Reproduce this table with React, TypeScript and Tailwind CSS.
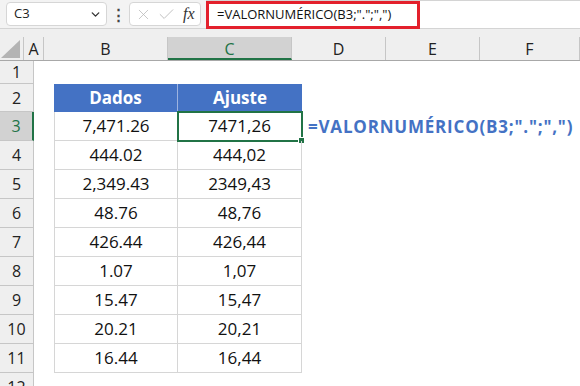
import React from 'react';
import { ChevronDown, X, Check } from 'lucide-react';

// Sheet geometry (px)
const COLS = [
  { key: 'A', w: 20 },
  { key: 'B', w: 124 },
  { key: 'C', w: 124 },
  { key: 'D', w: 94 },
  { key: 'E', w: 94 },
  { key: 'F', w: 100 },
];

const DATA: [string, string][] = [
  ['7,471.26', '7471,26'],
  ['444.02', '444,02'],
  ['2,349.43', '2349,43'],
  ['48.76', '48,76'],
  ['426.44', '426,44'],
  ['1.07', '1,07'],
  ['15.47', '15,47'],
  ['20.21', '20,21'],
  ['16.44', '16,44'],
];

const FORMULA = '=VALORNUMÉRICO(B3;".";",")';

function FormulaBar() {
  return (
    <div className="flex h-[28px] items-center bg-[#f3f3f3] pl-[6px]">
      <div className="flex h-[24px] w-[101px] items-center justify-between rounded-[4px] border border-[#d6d6d6] bg-white pl-[7px] pr-[4px]">
        <span className="text-[13px] text-[#222]">C3</span>
        <ChevronDown size={13} strokeWidth={2.5} className="text-[#333]" />
      </div>
      <div className="flex w-[22px] justify-center text-[15px] font-bold leading-none text-[#444]">⋮</div>
      <div className="flex h-[24px] w-[72px] items-center gap-[5px] rounded-[4px] border border-[#d6d6d6] bg-white pl-[5px]">
        <X size={17} strokeWidth={1.1} className="text-[#b8b8b8]" />
        <Check size={19} strokeWidth={1.1} className="text-[#b8b8b8]" />
        <span className="ml-[2px] text-[16px] italic leading-none text-[#333] [font-family:'Liberation_Serif',serif]">fx</span>
      </div>
      <div className="ml-[5px] flex h-[28px] flex-1 items-center border-t border-[#d4d4d4] bg-white">
        <div className="flex h-[28px] w-[214px] items-center border-[3px] border-[#e3202c] pl-[8px]">
          <span className="whitespace-nowrap text-[13px] text-[#111]">{FORMULA}</span>
        </div>
      </div>
    </div>
  );
}

function ColumnHeader() {
  return (
    <div className="bg-[#efefef]">
      <div className="h-[9px] border-t border-[#d4d4d4]" />
      <div className="flex h-[24px] border-b border-[#a8a8a8]">
        <div className="flex w-[34px] items-end justify-end border-r border-[#c6c6c6] pb-[2px] pr-[3px]">
          <svg width="19" height="18" viewBox="0 0 19 18">
            <polygon points="19,0 19,18 0,18" fill="#b4b4b4" />
          </svg>
        </div>
        {COLS.map((c) => {
          const sel = c.key === 'C';
          return (
            <div
              key={c.key}
              style={{ width: c.w }}
              className={
                sel
                  ? 'flex shrink-0 items-center justify-center border-b-2 border-r border-b-[#217346] border-r-[#c6c6c6] bg-[#d2d2d2] pt-[2px] text-[16px] text-[#217346]'
                  : 'flex shrink-0 items-center justify-center border-r border-[#c6c6c6] text-[16px] text-[#222]'
              }
            >
              {c.key}
            </div>
          );
        })}
      </div>
    </div>
  );
}

function RowHeader({ n, h, sel }: { n: number; h: number; sel?: boolean }) {
  return (
    <div
      style={{ height: h }}
      className={
        sel
          ? 'flex w-[34px] shrink-0 items-center justify-center border-b border-r-2 border-b-[#c6c6c6] border-r-[#217346] bg-[#d2d2d2] text-[16px] text-[#217346]'
          : 'flex w-[34px] shrink-0 items-center justify-center border-b border-r border-[#c6c6c6] bg-[#efefef] text-[16px] text-[#222]'
      }
    >
      {n}
    </div>
  );
}

export default function App() {
  return (
    <div className="h-[386px] w-[580px] overflow-hidden bg-white [font-family:'Open_Sans',sans-serif]">
      <FormulaBar />
      <ColumnHeader />

      {/* row 1 */}
      <div className="flex">
        <RowHeader n={1} h={23} />
      </div>

      {/* row 2: table head */}
      <div className="flex">
        <RowHeader n={2} h={28} />
        <div className="w-[20px] shrink-0" />
        <div className="flex h-[28px] w-[124px] shrink-0 items-center justify-center border-r border-[#9db3e0] bg-[#4472c4] text-[17px] font-bold text-white">
          Dados
        </div>
        <div className="flex h-[28px] w-[124px] shrink-0 items-center justify-center bg-[#4472c4] text-[17px] font-bold text-white">
          Ajuste
        </div>
      </div>

      {/* rows 3-11 */}
      {DATA.map(([a, b], i) => {
        const row = i + 3;
        const first = i === 0;
        return (
          <div key={row} className="flex">
            <RowHeader n={row} h={29} sel={first} />
            <div className="w-[20px] shrink-0" />
            <div className="flex h-[29px] w-[124px] shrink-0 items-center justify-center border-b border-l border-r border-[#d6d6d6] text-[17px] text-[#111]">
              {a}
            </div>
            <div className="relative flex h-[29px] w-[124px] shrink-0 items-center justify-center border-b border-r border-[#d6d6d6] text-[17px] text-[#111]">
              {b}
              {first && (
                <>
                  <div className="absolute -left-[1px] -top-[1px] h-[31px] w-[126px] border-2 border-[#217346]" />
                  <div className="absolute -bottom-[4px] -right-[4px] h-[7px] w-[7px] border border-white bg-[#217346]" />
                </>
              )}
            </div>
            {first && (
              <div className="flex h-[29px] items-center whitespace-nowrap pl-[6px] text-[17px] font-bold tracking-[0.8px] text-[#4472c4]">
                {FORMULA}
              </div>
            )}
          </div>
        );
      })}

      {/* row 12, cut by the window edge */}
      <div className="flex">
        <RowHeader n={12} h={29} />
      </div>
    </div>
  );
}
